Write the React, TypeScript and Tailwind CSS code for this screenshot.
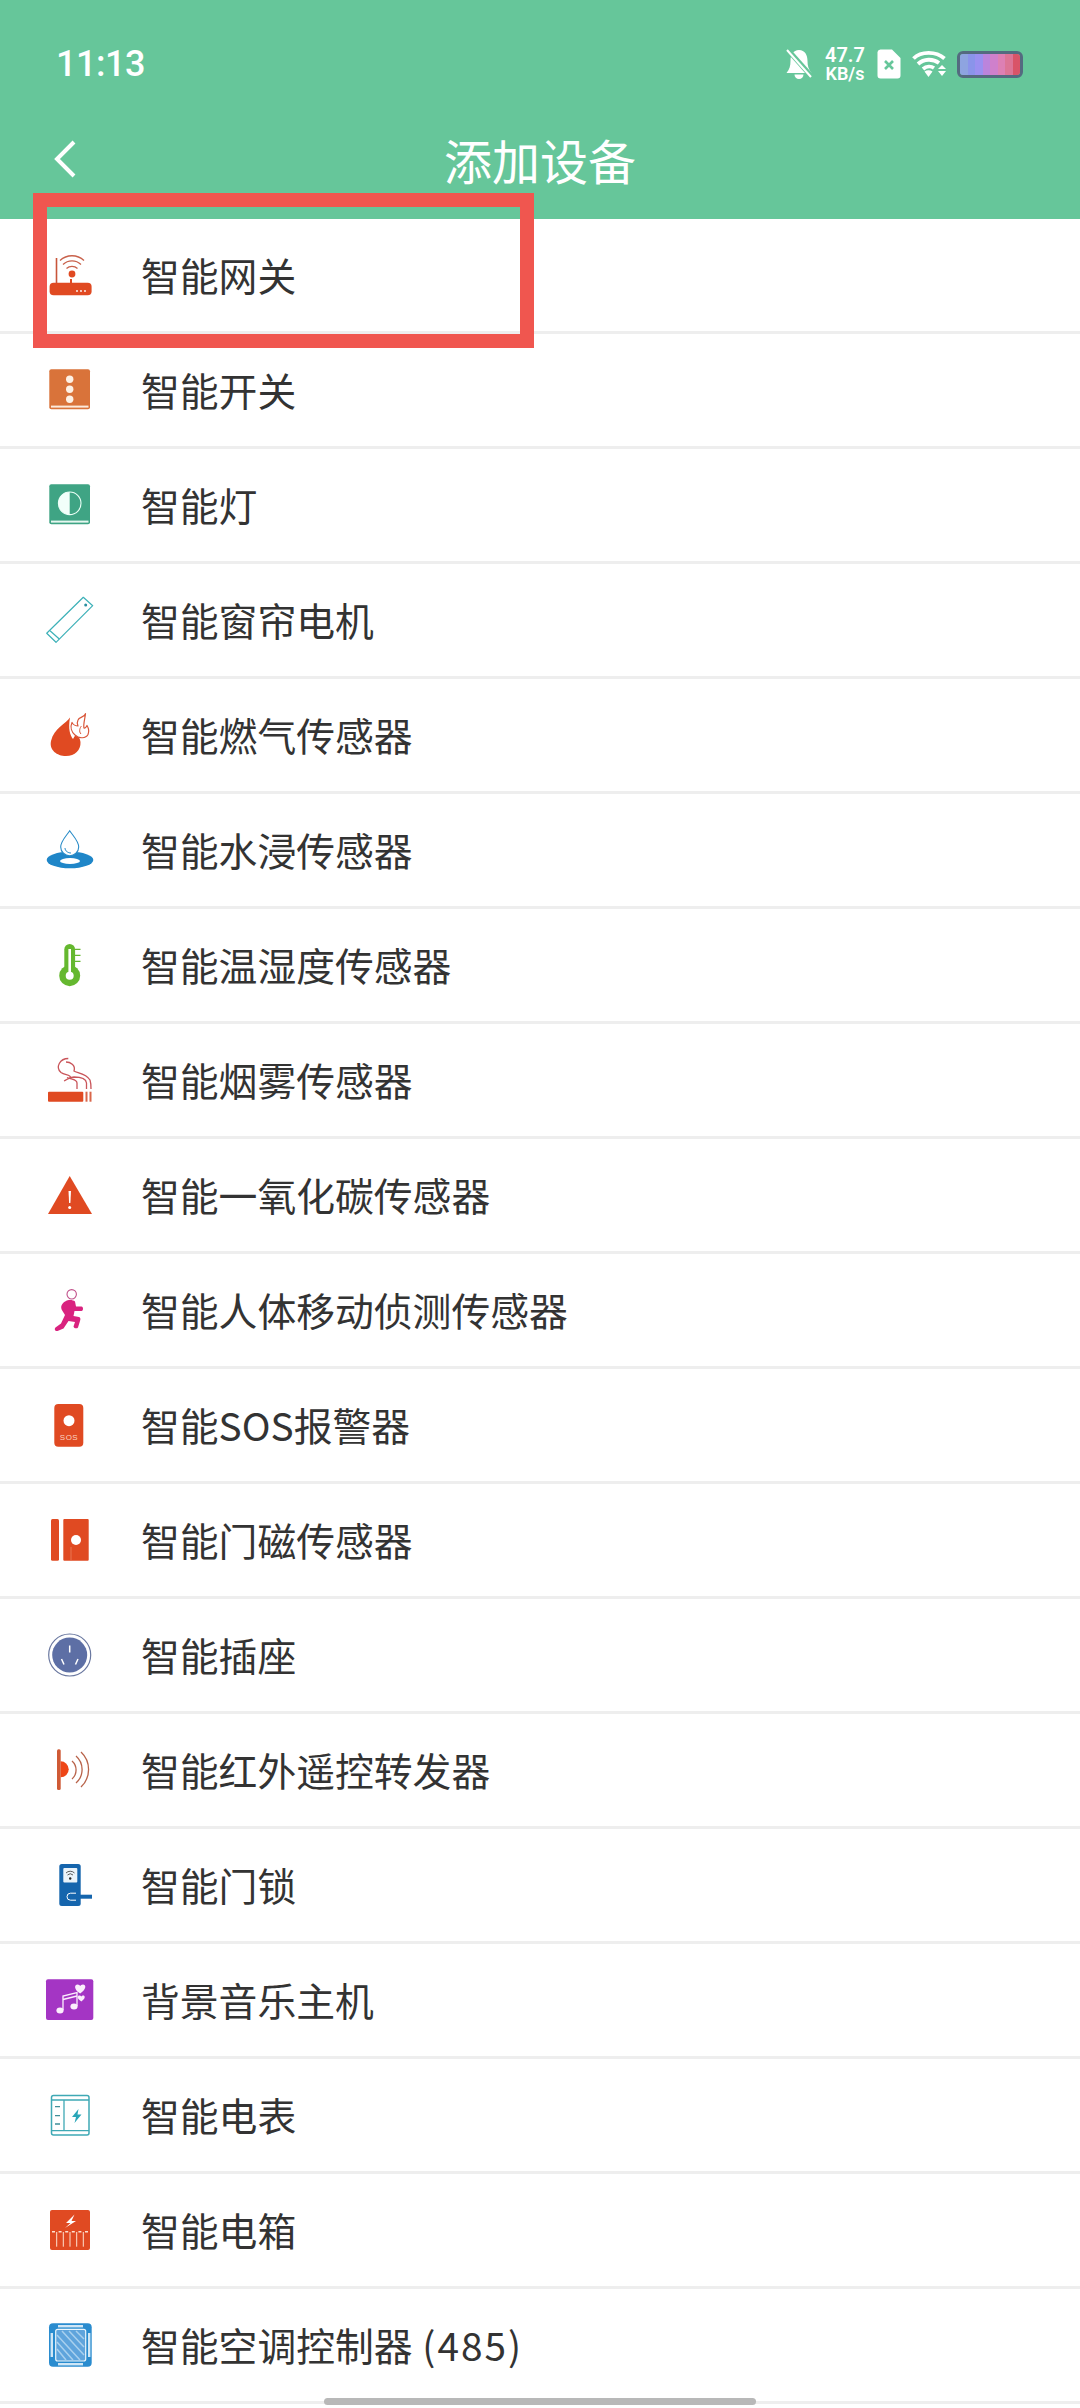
import React from "react";

const R = "#e04a22";

function Svg({ children }: { children: React.ReactNode }) {
  return (
    <svg width={60} height={60} viewBox="0 0 60 60" className="shrink-0">
      {children}
    </svg>
  );
}

const Router = () => (
  <Svg>
    <rect x="9.6" y="37.7" width="42" height="12.5" rx="4" fill={R} />
    <path d="M16.5 13V38" stroke="#c8553a" strokeWidth="1.6" fill="none" />
    <circle cx="32" cy="29" r="3.4" fill={R} />
    <path d="M31 34V38" stroke={R} strokeWidth="2" />
    <path d="M26.5 23.5a8 8 0 0 1 11 0M23 19.5a13 13 0 0 1 18 0M20 15.5a17.5 17.5 0 0 1 24 0" stroke="#c8604a" strokeWidth="1.3" fill="none" />
    <circle cx="37" cy="46" r="0.9" fill="#fff" />
    <circle cx="41" cy="46" r="0.9" fill="#fff" />
    <circle cx="45" cy="46" r="0.9" fill="#fff" />
  </Svg>
);
const Switch = () => (
  <Svg>
    <rect x="9.3" y="9.3" width="40.7" height="40" rx="2" fill="#d9733a" />
    <rect x="11" y="45.6" width="37.5" height="2" fill="#fdeadb" />
    <circle cx="29.7" cy="19.3" r="3.7" fill="#fdf0e4" />
    <circle cx="29.7" cy="29.3" r="3.7" fill="#fdf0e4" />
    <circle cx="29.7" cy="39.3" r="3.7" fill="#fdf0e4" />
  </Svg>
);
const Light = () => (
  <Svg>
    <rect x="9.3" y="9.3" width="40.7" height="40" rx="2" fill="#3fa484" />
    <rect x="11" y="45.6" width="37.5" height="2" fill="#e6f7f0" />
    <circle cx="29.7" cy="28.3" r="11.3" fill="none" stroke="#eafff6" strokeWidth="1.1" />
    <path d="M29.7 17a11.3 11.3 0 0 0 0 22.6Z" fill="#f2fffa" />
  </Svg>
);
const Curtain = () => (
  <Svg>
    <path d="M43.3 7.3L52.7 15.7L16 52.3L6.7 43.3Z" fill="none" stroke="#3db1b8" strokeWidth="1.2" strokeLinejoin="round" />
    <path d="M10 40.7L19.3 49" stroke="#3db1b8" strokeWidth="1.2" />
    <circle cx="45.7" cy="15" r="1.5" fill="#2a8fa0" />
  </Svg>
);
const Flame = () => (
  <Svg>
    <path d="M30 12.5C26 19 14 23 11 36C9 45 17 51 26 51C35 51 41 45 40.5 37C40 33 38 31 36 29L33 34C30 30 28 24 30 12.5Z" fill={R} />
    <path d="M45.5 8.5C45 12 39 12 38 15C37 17 37 19 38 21C36 21 33 19.5 32 17.5C30 22 31.5 27 35 30C39 34 46 33.5 48 29.5C49.5 26 48.5 23 47 20.5C46 22.5 45 23.5 44 23C43 19 45 14 45.5 8.5Z" fill="#fff" stroke="#d9573a" strokeWidth="1.2" strokeLinejoin="round" />
    <path d="M41 29C38.5 26.5 40 22.5 41.5 21" stroke="#d9573a" strokeWidth="1" fill="none" />
  </Svg>
);
const Water = () => (
  <Svg>
    <ellipse cx="30" cy="40" rx="23.3" ry="8.3" fill="#1f86c8" />
    <ellipse cx="30" cy="41" rx="10" ry="3" fill="#fff" />
    <path d="M29.7 10.7C27 15 20.7 21 20.7 27C20.7 32 25 35.7 29.7 35.7C34.4 35.7 38.7 32 38.7 27C38.7 21 32.4 15 29.7 10.7Z" fill="#fff" stroke="#2a8cc8" strokeWidth="1.1" />
    <path d="M25 28C25 31 28 33 31 33" stroke="#2a8cc8" strokeWidth="1" fill="none" />
  </Svg>
);
const Thermo = () => (
  <Svg>
    <circle cx="29.7" cy="40.7" r="10.5" fill="#65b82f" />
    <rect x="24.3" y="9" width="10.8" height="30" rx="5.4" fill="#65b82f" />
    <rect x="28.4" y="14" width="2.6" height="24" fill="#fff" />
    <circle cx="29.7" cy="40.7" r="4" fill="#fff" />
    <path d="M35 14.3H40.5M35 20.3H40.5M35 26.3H40.5" stroke="#65b82f" strokeWidth="1.2" />
  </Svg>
);
const Smoke = () => (
  <Svg>
    <rect x="8" y="41.7" width="35.3" height="10" rx="1" fill={R} />
    <rect x="45.5" y="41.7" width="2" height="10" fill="#d9664a" />
    <rect x="49.5" y="41.7" width="2" height="10" fill="#d9664a" />
    <path d="M28.3 8.5C20 8.5 15 17 21 22.5C25 25.5 31 24 31 28.5M37 39V33C37 29 31 29.5 27 27.5" stroke="#c9555a" strokeWidth="1.3" fill="none" />
    <path d="M26 12C30 12 36 15 34 21C37 23 46 23 50 30C51 33 51 36 51 39M46.5 39V33C46 28 40 27 34 27C28 27.5 27 30 24 31" stroke="#c9555a" strokeWidth="1.3" fill="none" />
  </Svg>
);
const Warn = () => (
  <Svg>
    <path d="M29.7 11L52 49H8Z" fill={R} />
    <path d="M28.5 26H31L30.4 38H29.1Z" fill="#fff" />
    <circle cx="29.7" cy="42.5" r="1.5" fill="#fff" />
  </Svg>
);
const Runner = () => (
  <Svg>
    <circle cx="31.7" cy="14.3" r="4.7" fill="none" stroke="#c0508a" strokeWidth="1.1" />
    <path d="M26 21C28 19.5 33 19.5 35 21.5L36 26.5H41.5C43.5 26.5 43.5 31 41.5 31H34.5L33.5 36L39 37C40.5 37.5 40.8 39 40 41L38 47.5C37 49 34 48.5 33.5 46.5L35 42L28.5 41L23.5 48.5L17.5 51C15 51.5 14 49 15.5 47.5L21 43.5L25 35L22.5 31C19.5 27 22 23 26 21Z" fill="#d9237f" />
  </Svg>
);
const Sos = () => (
  <Svg>
    <rect x="14.3" y="9" width="29" height="42.7" rx="4" fill={R} />
    <circle cx="29" cy="25.7" r="5.5" fill="#fff" />
    <text x="29" y="44.5" textAnchor="middle" fontSize="8" fontFamily="'Liberation Sans', sans-serif" fill="#fbd3c0" letterSpacing="0.5">SOS</text>
  </Svg>
);
const Door = () => (
  <Svg>
    <rect x="11" y="9" width="8" height="41.7" rx="1.5" fill={R} />
    <rect x="23.3" y="9" width="25.4" height="41.7" rx="1" fill={R} />
    <circle cx="36" cy="30" r="5" fill="#fff" />
    <path d="M31 37V50" stroke="#f0a080" strokeWidth="0.5" />
  </Svg>
);
const Socket = () => (
  <Svg>
    <circle cx="29.7" cy="30" r="21" fill="none" stroke="#6a78a0" strokeWidth="1.2" />
    <circle cx="29.7" cy="30" r="17.5" fill="#5d6fa5" />
    <path d="M29.7 20.5V27.5M21.5 34L24 39.5M38 34L35.5 39.5" stroke="#fff" strokeWidth="1.5" />
  </Svg>
);
const Ir = () => (
  <Svg>
    <rect x="17" y="9.3" width="3.7" height="40.7" rx="1.5" fill="#cf5a35" />
    <path d="M20.7 21.3a8 8 0 0 1 0 16Z" fill="#ee4516" />
    <path d="M32 21a12 12 0 0 1 0 18M36 16a18 18 0 0 1 0 27M41 12a24 24 0 0 1 0 35" stroke="#b8634a" strokeWidth="1.3" fill="none" />
  </Svg>
);
const Lock = () => (
  <Svg>
    <rect x="19.3" y="9" width="21.4" height="42" rx="2.5" fill="#1565ad" />
    <rect x="23.3" y="13" width="14" height="14.5" rx="1" fill="#eaf3fa" />
    <path d="M26 18a6 6 0 0 1 8.5 0M27.5 20a4 4 0 0 1 5.5 0" stroke="#333" strokeWidth="0.8" fill="none" />
    <circle cx="30.2" cy="23.5" r="1.2" fill="#222" />
    <path d="M36 38.2H30.5a3.5 3.5 0 0 0 0 7H36" fill="none" stroke="#fff" strokeWidth="1" />
    <rect x="31" y="39.7" width="21" height="4" fill="#1565ad" />
  </Svg>
);
const Music = () => (
  <Svg>
    <rect x="6" y="9.3" width="47.3" height="40.7" rx="2" fill="#a435c4" />
    <path d="M23 40V26L37 22.5V36" stroke="#fbeefc" strokeWidth="1.3" fill="none" />
    <path d="M23 29.5L37 26" stroke="#fbeefc" strokeWidth="1.3" />
    <ellipse cx="20" cy="40.5" rx="3.6" ry="3" fill="#fbeefc" />
    <ellipse cx="34" cy="36.5" rx="3.6" ry="3" fill="#fbeefc" />
    <path d="M38 22C34 18.5 34.5 14.5 37.5 14.5C39 14.5 39.8 15.3 40.2 16C40.6 15.3 41.5 14.5 43 14.5C46 14.5 46.5 18.5 42 22L40.2 23.5Z" fill="#fbeefc" />
    <path d="M39.5 30C37 28 37.5 25.5 39.3 25.5C40.3 25.5 41 26 41.3 26.5C41.6 26 42.3 25.5 43.3 25.5C45 25.5 45.5 28 43 30L41.3 31.5Z" fill="#fbeefc" />
  </Svg>
);
const Meter = () => (
  <Svg>
    <rect x="11.5" y="10.5" width="37.5" height="39.5" rx="2" fill="none" stroke="#3fa9b5" strokeWidth="1.5" />
    <path d="M11.5 15H49M11.5 45.7H49M24 15V45.7" stroke="#3fa9b5" strokeWidth="1.3" />
    <path d="M15 21.7H20M15 30.7H20M15 39H20" stroke="#3f8f99" strokeWidth="1.3" />
    <path d="M38.5 24L32 32H36L34.5 38L41.5 29.5H37.5Z" fill="#2aa6b8" />
  </Svg>
);
const Box = () => (
  <Svg>
    <rect x="10" y="10" width="40" height="40" rx="2" fill={R} />
    <path d="M34.5 14.5L26 23H30.5L25 28L36 21H31.5Z" fill="#fff" />
    <path d="M12 31.7H48" stroke="#fde0d0" strokeWidth="1.6" strokeDasharray="3 3.6" />
    <path d="M16.7 32V46.7M23.3 32V46.7M30 32V46.7M36.7 32V46.7M43.3 32V46.7" stroke="#fde0d0" strokeWidth="1" />
  </Svg>
);
const Ac = () => (
  <Svg>
    <rect x="9" y="8.3" width="42.7" height="43.4" rx="4" fill="#2a8ccf" />
    <rect x="15.7" y="14.3" width="30" height="31.7" rx="2" fill="#5fa4dc" stroke="#eaf5fc" strokeWidth="1.2" />
    <path d="M17 20L40 45M17 27L33 45M22 16L44 40M29 16L44 32M36 16L44 24M17 34L26 45" stroke="#a8d0ee" strokeWidth="1.5" />
    <rect x="18" y="10" width="25" height="2.4" fill="#cfe6f6" />
    <rect x="18" y="48" width="25" height="2.4" fill="#cfe6f6" />
    <rect x="10.6" y="18" width="2.4" height="24" fill="#cfe6f6" />
    <rect x="48" y="18" width="2.4" height="24" fill="#cfe6f6" />
  </Svg>
);

const rows: [React.ComponentType, React.ReactNode, string][] = [
  [Router, "智能网关", "a"],
  [Switch, "智能开关", "b"],
  [Light, "智能灯", "c"],
  [Curtain, "智能窗帘电机", "d"],
  [Flame, "智能燃气传感器", "e"],
  [Water, "智能水浸传感器", "f"],
  [Thermo, "智能温湿度传感器", "g"],
  [Smoke, "智能烟雾传感器", "h"],
  [Warn, "智能一氧化碳传感器", "i"],
  [Runner, "智能人体移动侦测传感器", "j"],
  [Sos, "智能SOS报警器", "k"],
  [Door, "智能门磁传感器", "l"],
  [Socket, "智能插座", "m"],
  [Ir, "智能红外遥控转发器", "n"],
  [Lock, "智能门锁", "o"],
  [Music, "背景音乐主机", "p"],
  [Meter, "智能电表", "q"],
  [Box, "智能电箱", "r"],
  [Ac, <>智能空调控制器 <span className="ml-[1px] tracking-[2px]">(485)</span></>, "s"],
];

const Status = () => (
  <div className="flex h-[48px] items-center justify-between pl-[56px] pr-[57px]">
    <span className="text-[36px] font-medium leading-none tracking-[-0.5px] text-white" style={{ fontFamily: "Roboto, sans-serif" }}>11:13</span>
    <div className="flex items-center">
      <svg width="28" height="30" viewBox="0 0 28 30">
        <path d="M14 1C8 1 5.5 6 5.5 12C5.5 17 4.5 20 1.5 24H26.5C23.5 20 22.5 17 22.5 12C22.5 6 20 1 14 1Z" fill="#fff" />
        <path d="M9.5 25.5a4.5 4.5 0 0 0 9 0Z" fill="#fff" />
        <path d="M3 1L27 28" stroke="#66c69a" strokeWidth="5" />
        <path d="M2 1L26 28" stroke="#fff" strokeWidth="2" />
      </svg>
      <div className="ml-[11px] flex w-[42px] flex-col items-center text-[20px] font-semibold leading-[20px] text-white" style={{ fontFamily: "Roboto, sans-serif" }}>
        <span>47.7</span>
        <span className="text-[18px] leading-[18px]">KB/s</span>
      </div>
      <svg className="ml-[11px]" width="24" height="30" viewBox="0 0 24 30">
        <path d="M3 0.5H15L23.5 9V26.5a3 3 0 0 1-3 3H3.5a3 3 0 0 1-3-3V3a3 3 0 0 1 3-2.5Z" fill="#fff" />
        <path d="M8 12L16 20M16 12L8 20" stroke="#66c69a" strokeWidth="2.6" />
      </svg>
      <svg className="ml-[11px]" width="35" height="28" viewBox="0 0 35 28">
        <path d="M1.5 8.5C9 1 24 1 32.5 8.5M6 14C12 8.5 21 8.5 27 13M11 19C14.5 16 19 16 22 18" stroke="#fff" strokeWidth="3.8" fill="none" />
        <path d="M12.5 21.5L16.5 27L20.5 21.5C18 19.8 15 19.8 12.5 21.5Z" fill="#fff" />
        <path d="M26 19H34L30 15ZM26 21H34L30 26Z" fill="#fff" />
      </svg>
      <div className="ml-[10px] flex h-[27px] w-[66px] gap-0 overflow-hidden rounded-[6px] border-[3px] border-[#546a80]">
        {["#8ea4e0", "#8a94ea", "#9a90f0", "#bb84dc", "#cf80cc", "#dd80b4", "#dc7596", "#d95468"].map((c) => (
          <div key={c} className="flex-1" style={{ background: c }} />
        ))}
      </div>
    </div>
  </div>
);

export default function App() {
  return (
    <div className="relative h-[2408px] w-[1080px] overflow-hidden bg-white" style={{ fontFamily: "'Noto Sans CJK SC', sans-serif" }}>
      <header className="bg-[#66c69a] pb-[24px] pt-[40px]">
        <Status />
        <div className="relative mt-[35px] flex h-[72px] items-center justify-center">
          <svg className="absolute left-[52px] top-[16px]" width="26" height="40" viewBox="0 0 26 40">
            <path d="M22 3L5 20L22 37" fill="none" stroke="#fff" strokeWidth="4" />
          </svg>
          <h1 className="text-[48px] font-normal leading-none text-white">添加设备</h1>
        </div>
      </header>
      <main>
        {rows.map(([Icon, label, k]) => (
          <div key={k} className="flex h-[115px] items-center border-b-[3px] border-[#eeeeee] pl-[40px]">
            <Icon />
            <span className="ml-[41px] -translate-y-[1px] text-[38.8px] leading-none text-[#333333]">{label}</span>
          </div>
        ))}
      </main>
      <div className="absolute left-[33px] top-[193px] h-[155px] w-[501px] border-[14px] border-[#f0564f]" />
      <div className="absolute bottom-[3px] left-[324px] h-[7px] w-[432px] rounded-[4px] bg-[#b8b8b8]" />
    </div>
  );
}
